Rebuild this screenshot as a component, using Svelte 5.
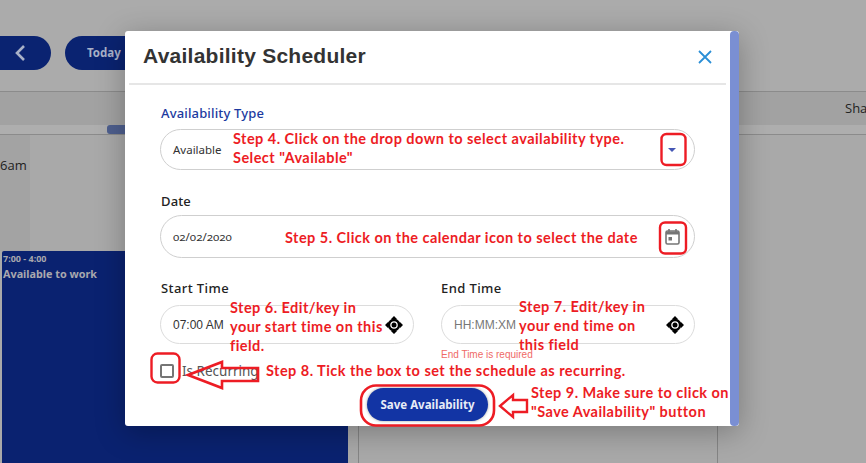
<script>
  const notes = [
    { cls: 'n4', lines: ['Step 4. Click on the drop down to select availability type.', 'Select "Available"'] },
    { cls: 'n5', lines: ['Step 5. Click on the calendar icon to select the date'] },
    { cls: 'n6', lines: ['Step 6. Edit/key in', 'your start time on this', 'field.'] },
    { cls: 'n7', lines: ['Step 7. Edit/key in', 'your end time on', 'this field'] },
    { cls: 'n8', lines: ['Step 8. Tick the box to set the schedule as recurring.'] },
    { cls: 'n9', lines: ['Step 9. Make sure to click on', '"Save Availability" button'] }
  ];
</script>

<div class="page">
  <div class="toolbar">
    <button class="nav back" aria-label="Back">
      <svg width="12" height="18" viewBox="0 0 12 18"><path d="M10 2 3 9l7 7" fill="none" stroke="#a9b2c8" stroke-width="2.6"/></svg>
    </button>
    <button class="nav today">Today</button>
  </div>
  <div class="dayhead">
    <span class="share">Sha</span>
    <div class="track"><i class="thumb"></i></div>
  </div>
  <div class="grid">
    <div class="hours"><span class="hour">6am</span></div>
    <div class="event">
      <b class="ev-time">7:00 - 4:00</b>
      <b class="ev-title">Available to work</b>
    </div>
    <i class="vline"></i>
    <i class="vline2"></i>
  </div>

  <section class="modal">
    <div class="body">
      <header class="head">
        <h1>Availability Scheduler</h1>
        <svg class="close" width="14" height="14" viewBox="0 0 14 14"><path d="M1 1l12 12M13 1 1 13" stroke="#2b8fd6" stroke-width="1.8" fill="none"/></svg>
      </header>
      <form class="form">
        <label class="lbl blue" for="t">Availability Type</label>
        <div class="field tall" id="t">
          <span class="val">Available</span>
          <svg class="caret" width="8" height="4" viewBox="0 0 8 4"><path d="M0 0h8L4 4z" fill="#4557b5"/></svg>
        </div>
        <label class="lbl date" for="d">Date</label>
        <div class="field taller" id="d">
          <span class="val nums">02/02/2020</span>
          <svg class="cal" width="15" height="16" viewBox="0 0 15 16">
            <path d="M4 0v3M11 0v3" stroke="#757575" stroke-width="1.6"/>
            <rect x="1" y="2" width="13" height="13" rx="1.5" fill="none" stroke="#757575" stroke-width="1.6"/>
            <path d="M1 2.500h13v3H1z" fill="#757575"/>
            <rect x="3.500" y="8" width="3.500" height="3.500" fill="#757575"/>
          </svg>
        </div>
        <div class="times">
          <div class="col">
            <span class="lbl">Start Time</span>
            <div class="field short">
              <span class="time">07:00 AM</span>
              <svg class="mv" width="18" height="18" viewBox="0 0 18 18"><use href="#move"/></svg>
            </div>
          </div>
          <div class="col end">
            <span class="lbl">End Time</span>
            <div class="field short">
              <span class="time ph">HH:MM:XM</span>
              <svg class="mv" width="18" height="18" viewBox="0 0 18 18"><use href="#move"/></svg>
            </div>
            <span class="err">End Time is required</span>
          </div>
        </div>
        <div class="recur"><i class="box"></i><span>Is Recurring</span></div>
        <div class="actions"><button type="button" class="save">Save Availability</button></div>
      </form>
    </div>
    <div class="scroll"></div>
  </section>

  <svg class="defs" width="0" height="0">
    <defs>
      <g id="move">
        <path d="M9 0l3.500 3.500h-7zM9 18l-3.500-3.500h7zM0 9l3.500-3.500v7zM18 9l-3.500 3.500v-7z" fill="#000"/>
        <circle cx="9" cy="9" r="5" fill="none" stroke="#000" stroke-width="2.400"/>
        <circle cx="9" cy="9" r="2.500" fill="#000"/>
      </g>
    </defs>
  </svg>

  <svg class="marks" width="866" height="463" viewBox="0 0 866 463" fill="none" stroke="#ed1c24" stroke-width="2.4">
    <rect x="661.5" y="134" width="24" height="31" rx="5"/>
    <rect x="660" y="222.500" width="26" height="31" rx="5"/>
    <rect x="151.5" y="353.5" width="28" height="29" rx="6"/>
    <path d="M188 375l34-13v6h36v13h-36v7z" stroke-width="2.6"/>
    <rect x="361" y="385.500" width="133" height="40" rx="15" stroke-width="2.6"/>
    <path d="M500 406l13-11v5h14v12h-14v5z" stroke-width="2.4"/>
  </svg>

  {#each notes as n}
    <div class="note {n.cls}">
      {#each n.lines as l}<div>{l}</div>{/each}
    </div>
  {/each}
</div>

<style>
  :global(body) { margin: 0; }
  .page {
    position: relative; width: 866px; height: 463px; overflow: hidden;
    background: #a9a9a9; font-family: "Open Sans", sans-serif;
  }
  .toolbar { height: 92px; box-sizing: border-box; padding-top: 36px; display: flex; gap: 14px; background: #ababab; border-bottom: 1px solid #8b8b8b; }
  .nav { height: 34px; border: 0; background: #0a2371; color: #a9b2c8; font: 700 11.500px "Noto Sans", sans-serif; padding: 0; display: flex; align-items: center; }
  .back { width: 51px; border-radius: 0 17px 17px 0; justify-content: flex-end; padding-right: 25px; box-sizing: border-box; }
  .today { width: 75px; border-radius: 17px 0 0 17px; padding: 0 0 2px 22px; box-sizing: border-box; }
  .dayhead { position: relative; height: 43px; box-sizing: border-box; background: #a2a2a2; border-bottom: 1px solid #8b8b8b; display: flex; flex-direction: column; justify-content: flex-end; }
  .share { position: absolute; left: 845px; top: 7px; font-size: 13px; color: #222; }
  .track { height: 9px; background: #aeaeae; }
  .thumb { display: block; margin-left: 107px; width: 20px; height: 9px; background: #4e5f8e; border-radius: 3px 0 0 3px; }
  .grid { position: relative; height: 328px; background: #a9a9a9; }
  .hours { width: 30px; height: 116px; background: #a3a3a3; box-sizing: border-box; padding-top: 18px; }
  .hour { font-size: 13px; line-height: 20px; color: #1e1e1e; }
  .event { position: absolute; left: 2px; top: 116px; width: 346px; height: 212px; box-sizing: border-box; background: #0a2270; padding: 2px 1px; border-radius: 2px 0 0 0; display: flex; flex-direction: column; color: #a8a8ae; font-family: "Noto Sans", sans-serif; }
  .ev-time { font-size: 9px; line-height: 12px; }
  .ev-title { font-size: 10.800px; line-height: 17px; }
  .vline { position: absolute; left: 358px; top: 291px; width: 1px; height: 37px; background: #858585; }
  .vline2 { position: absolute; left: 717px; top: 291px; width: 1px; height: 37px; background: #858585; }

  .modal {
    position: absolute; left: 125px; top: 31px; width: 614px; height: 395px;
    background: #fff; border-radius: 3px; display: flex;
    box-shadow: 0 6px 30px rgba(0,0,0,.28);
  }
  .body { flex: 1; min-width: 0; }
  .scroll { width: 9px; background: #7a8fd3; border-radius: 4px; }
  .head { height: 54px; margin: 0 4px; box-sizing: border-box; border-bottom: 2px solid #e6e6e6; display: flex; align-items: center; justify-content: space-between; padding: 0 14px 0 14px; }
  h1 { margin: 0 0 2px; font: 700 21px "Liberation Sans", Arial, sans-serif; color: #333; letter-spacing: .25px; }
  .form { padding: 19px 35px 0 35px; display: flex; flex-direction: column; }
  .lbl { font: 500 13px/18px "Noto Sans", sans-serif; color: #222; padding-left: 1px; letter-spacing: .15px; }
  .blue { color: #1c3aa0; }
  .date { margin-top: 22px; }
  .field { border: 1px solid #cfcfcf; border-radius: 22px; box-sizing: border-box; display: flex; align-items: center; justify-content: space-between; background: #fff; }
  .tall { height: 41px; margin-top: 7px; padding: 0 18px 0 12px; }
  .taller { height: 43px; margin-top: 5px; padding: 0 14px 0 12px; }
  .val { font: 11.500px "Noto Sans", sans-serif; color: #333; }
  .times { display: grid; grid-template-columns: 254px 254px; gap: 27px; margin-top: 21px; }
  .nums { font-variant-numeric: oldstyle-nums; }
  .col { display: flex; flex-direction: column; }
  .col .lbl { letter-spacing: .4px; }
  .end .lbl { padding-left: 0; }
  .short { height: 39px; margin-top: 8px; padding: 0 10px 0 12px; border-color: #dcdcdc; }
  .time { font: 12px "Liberation Sans", Arial, sans-serif; color: #333; }
  .ph { color: #777; }
  .err { font: 10px/12px "Liberation Sans", Arial, sans-serif; color: #ef6a66; margin-top: 5px; height: 12px; }
  .recur { display: flex; align-items: center; gap: 8px; font: 13.500px/20px "Noto Sans", sans-serif; color: #555; }
  .box { width: 14px; height: 14px; box-sizing: border-box; border: 2px solid #757575; border-radius: 2px; }
  .actions { display: flex; margin-left: 207px; padding-top: 7px; }
  .save { width: 121px; height: 33px; border: 0; border-radius: 17px; background: #1234a4; color: #e8ecf7; font: 700 11.5px "Noto Sans", sans-serif; padding: 0; box-shadow: 0 0 3px rgba(0,0,0,.4); }

  .marks { position: absolute; left: 0; top: 0; pointer-events: none; }
  .defs { position: absolute; }
  .note { position: absolute; color: #ed1c24; font: 700 14.500px/19px "Lato", sans-serif; white-space: nowrap; letter-spacing: .46px; }
  .n4 { left: 233px; top: 129px; }
  .n5 { left: 285px; top: 228px; }
  .n6 { left: 230px; top: 298px; }
  .n7 { left: 519px; top: 297px; }
  .n8 { left: 266px; top: 361px; }
  .n9 { left: 531px; top: 383px; }
</style>
